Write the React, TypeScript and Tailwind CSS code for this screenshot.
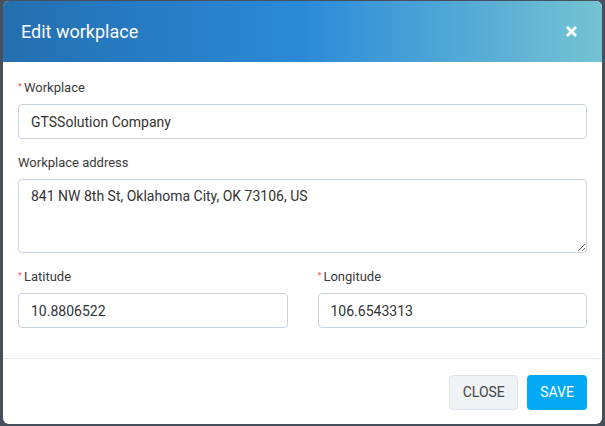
import { X } from 'lucide-react'

function Label({ text, required }: { text: string; required?: boolean }) {
  return (
    <div className="flex items-center text-[13px] leading-4 text-[#3a3a3a] mb-[8px]">
      {required && <span className="text-[#f25c5c] text-[9px] mr-[2px] -mt-[2px]">*</span>}
      {text}
    </div>
  )
}

export default function App() {
  const inputCls =
    'w-full h-[35px] px-3 border border-[#c9d3df] rounded-[4px] text-[14px] text-[#333] outline-none bg-white'

  return (
    <div
      className="w-[605px] h-[426px] bg-[#45505c] pt-px pl-[3px] pr-[3px] pb-[2px]"
      style={{ fontFamily: 'Roboto, "Liberation Sans", sans-serif' }}
    >
      <div className="h-full bg-white rounded-[6px] overflow-hidden flex flex-col">
        <div className="h-[61px] shrink-0 flex items-center justify-between pl-[18px] pr-[23px] bg-gradient-to-r from-[#236fb0] via-[#2b8ad8] to-[#74c3d3]">
          <h2 className="text-white text-[18px] font-normal">Edit workplace</h2>
          <X className="w-[15px] h-[15px] text-white" strokeWidth={4.5} />
        </div>

        <div className="px-[15px] pt-[18px] pb-[30px] border-b border-[#e5e8ec]">
          <Label text="Workplace" required />
          <input className={inputCls} defaultValue="GTSSolution Company" />

          <div className="mt-[16px]">
            <Label text="Workplace address" />
            <textarea
              className="w-full h-[74px] px-3 py-[6px] border border-[#c9d3df] rounded-[4px] text-[14px] text-[#333] outline-none block"
              defaultValue="841 NW 8th St, Oklahoma City, OK 73106, US"
            />
          </div>

          <div className="mt-[16px] grid grid-cols-2 gap-[30px]">
            <div>
              <Label text="Latitude" required />
              <input className={inputCls} defaultValue="10.8806522" />
            </div>
            <div>
              <Label text="Longitude" required />
              <input className={inputCls} defaultValue="106.6543313" />
            </div>
          </div>
        </div>

        <div className="flex justify-end gap-[9px] px-[15px] pt-[16px]">
          <button className="h-[35px] w-[69px] bg-[#f0f3f6] border border-[#dde3e9] rounded-[4px] text-[14px] text-[#444]">
            CLOSE
          </button>
          <button className="h-[35px] px-[13px] bg-[#03a9f4] rounded-[4px] text-[14px] text-white">
            SAVE
          </button>
        </div>
      </div>
    </div>
  )
}
